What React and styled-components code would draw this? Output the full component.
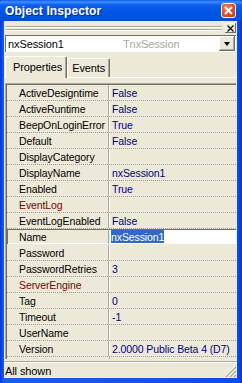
import React from "react";
import styled, { createGlobalStyle } from "styled-components";

const GlobalStyle = createGlobalStyle`
  html, body { margin: 0; padding: 0; overflow: hidden; background: #fff; }
  * { box-sizing: border-box; }
`;

const properties = [
  { name: "ActiveDesigntime", value: "False" },
  { name: "ActiveRuntime", value: "False" },
  { name: "BeepOnLoginError", value: "True" },
  { name: "Default", value: "False" },
  { name: "DisplayCategory", value: "" },
  { name: "DisplayName", value: "nxSession1" },
  { name: "Enabled", value: "True" },
  { name: "EventLog", value: "", linked: true },
  { name: "EventLogEnabled", value: "False" },
  { name: "Name", value: "nxSession1", selected: true },
  { name: "Password", value: "" },
  { name: "PasswordRetries", value: "3" },
  { name: "ServerEngine", value: "", linked: true },
  { name: "Tag", value: "0" },
  { name: "Timeout", value: "-1" },
  { name: "UserName", value: "" },
  { name: "Version", value: "2.0000 Public Beta 4 (D7)" },
];

const Window = styled.div`
  width: 242px;
  height: 383px;
  display: flex;
  flex-direction: column;
  background: linear-gradient(to right, #0831d9 0, #0a4ee6 2px, #1660e8 4px, #0a4ee6 238px, #0831d9 242px);
  font-family: "Liberation Sans", Arial, sans-serif;
  font-size: 10.5px;
  letter-spacing: -0.1px;
  color: #000;
`;

const TitleBar = styled.div`
  height: 21px;
  display: flex;
  align-items: center;
  justify-content: space-between;
  padding: 0 5px 0 5px;
  background: linear-gradient(to bottom, #0d5cf0 0, #3f8ef9 2px, #0e5ef0 5px, #0055e6 12px, #0050dc 19px, #0046cf 21px);
  border-radius: 2px 2px 0 0;
`;

const Title = styled.span`
  color: #fff;
  font-weight: bold;
  font-size: 12px;
  letter-spacing: 0.1px;
  text-shadow: 1px 1px 0 #0a2a8c;
`;

const CloseButton = styled.div`
  width: 15px;
  height: 15px;
  border: 1px solid #fff;
  border-radius: 3px;
  background: radial-gradient(circle at 35% 30%, #f08a6a 0, #e2532c 45%, #c23a14 100%);
  display: flex;
  align-items: center;
  justify-content: center;
  margin-right: 1px;
`;

const Body = styled.div`
  flex: 1;
  min-height: 0;
  margin: 0 5px 5px 4px;
  background: #ece9d8;
  display: flex;
  flex-direction: column;
`;

const DockBar = styled.div`
  height: 14px;
  display: flex;
  align-items: center;
  gap: 3px;
  padding: 0 1px 0 2px;
`;

const Grip = styled.div`
  flex: 1;
  height: 5px;
  background: linear-gradient(
    to bottom,
    #aca899 0 1px,
    #fff 1px 2px,
    transparent 2px 3px,
    #aca899 3px 4px,
    #fff 4px 5px
  );
`;

const MiniClose = styled.div`
  width: 11px;
  height: 10px;
  background: #ece9d8;
  box-shadow: inset -1px -1px #716f64, inset 1px 1px #fff;
  display: flex;
  align-items: center;
  justify-content: center;
`;

const Combo = styled.div`
  height: 17px;
  margin: 0 1px;
  display: flex;
  align-items: center;
  background: #fff;
  padding: 1px 1px 1px 3px;
  font-size: 11px;
  box-shadow: inset 1px 1px #716f64, inset -1px -1px #fff;
`;

const ComboName = styled.span`
  width: 115px;
`;

const ComboType = styled.span`
  flex: 1;
  color: #a7a6a0;
`;

const DropButton = styled.div`
  width: 16px;
  height: 15px;
  background: #ece9d8;
  box-shadow: inset -1px -1px #716f64, inset 1px 1px #fff, inset -2px -2px #aca899;
  display: flex;
  align-items: center;
  justify-content: center;
  &::after {
    content: "";
    border-left: 3.5px solid transparent;
    border-right: 3.5px solid transparent;
    border-top: 4px solid #000;
    margin-top: 1px;
  }
`;

const TabStrip = styled.div`
  height: 23px;
  margin-top: 3px;
  padding-left: 1px;
  display: flex;
  align-items: flex-end;
  border-bottom: 1px solid #fff;
`;

const Tab = styled.div`
  height: ${(p) => (p.$active ? "22px" : "19px")};
  margin-bottom: ${(p) => (p.$active ? "-1px" : "0")};
  padding: 0 ${(p) => (p.$active ? "4px" : "4px")} ${(p) => (p.$active ? "2px" : "1px")}
    ${(p) => (p.$active ? "7px" : "4px")};
  display: flex;
  align-items: center;
  background: #ece9d8;
  border-top: 1px solid #fff;
  border-left: 1px solid #fff;
  border-right: 1px solid #716f64;
  box-shadow: inset -1px 0 #aca899;
  border-radius: 2px 2px 0 0;
  font-size: 11px;
`;

const Grid = styled.div`
  margin: 5px 1px 0;
  padding-top: 1px;
  border-top: 1px solid #aca899;
  border-left: 1px solid #aca899;
  box-shadow: inset 1px 1px #716f64;
  display: flex;
  flex-direction: column;
`;

const Row = styled.div`
  height: 16px;
  display: flex;
  border-bottom: 1px dotted #a09e94;
  margin-left: 1px;
  ${(p) =>
    p.$selected &&
    `
    border-bottom-color: transparent;
    box-shadow: inset 1px 1px #716f64, inset 0 -1px #fff;
  `}
`;

const NameCell = styled.div`
  width: 102px;
  padding-left: 12px;
  display: flex;
  align-items: center;
  white-space: nowrap;
  overflow: hidden;
  color: ${(p) => (p.$linked ? "#800000" : "#000")};
  border-right: 1px solid #aca899;
`;

const ValueCell = styled.div`
  flex: 1;
  display: flex;
  align-items: center;
  padding-left: 2px;
  white-space: nowrap;
  overflow: hidden;
  color: #000080;
  border-left: 1px solid #fff;
  ${(p) =>
    p.$editing &&
    `
    background: #fff;
    margin: 1px 0 1px 1px;
    border-left: none;
    padding-left: 1px;
  `}
`;

const Highlight = styled.span`
  background: #316ac5;
  color: #fff;
  padding: 1px 0;
`;

const GridFill = styled.div`
  height: 2px;
  margin-left: 103px;
  border-left: 1px solid #aca899;
`;

const StatusBar = styled.div`
  height: 17px;
  margin-top: auto;
  border-top: 1px solid #aca899;
  box-shadow: inset 0 1px #fff;
  display: flex;
  align-items: center;
  justify-content: space-between;
  padding: 1px 1px 0 1px;
  font-size: 11px;
`;

const SizeGrip = styled.svg`
  align-self: flex-end;
  margin-bottom: 1px;
`;

export default function App() {
  return (
    <>
      <GlobalStyle />
      <Window>
        <TitleBar>
          <Title>Object Inspector</Title>
          <CloseButton>
            <svg width="9" height="9" viewBox="0 0 9 9">
              <path d="M1 1 L8 8 M8 1 L1 8" stroke="#fff" strokeWidth="1.8" />
            </svg>
          </CloseButton>
        </TitleBar>
        <Body>
          <DockBar>
            <Grip />
            <MiniClose>
              <svg width="7" height="7" viewBox="0 0 7 7">
                <path d="M0.5 0.5 L6.5 6.5 M6.5 0.5 L0.5 6.5" stroke="#000" strokeWidth="1.1" />
              </svg>
            </MiniClose>
          </DockBar>
          <Combo>
            <ComboName>nxSession1</ComboName>
            <ComboType>TnxSession</ComboType>
            <DropButton />
          </Combo>
          <TabStrip>
            <Tab $active>Properties</Tab>
            <Tab>Events</Tab>
          </TabStrip>
          <Grid>
            {properties.map((p) => (
              <Row key={p.name} $selected={p.selected}>
                <NameCell $linked={p.linked}>{p.name}</NameCell>
                <ValueCell $editing={p.selected}>
                  {p.selected ? <Highlight>{p.value}</Highlight> : p.value}
                </ValueCell>
              </Row>
            ))}
            <GridFill />
          </Grid>
          <StatusBar>
            <span>All shown</span>
            <SizeGrip width="12" height="12" viewBox="0 0 12 12">
              <path d="M11 1 L1 11 M11 5 L5 11 M11 9 L9 11" stroke="#fff" strokeWidth="1" />
              <path d="M12 2 L2 12 M12 6 L6 12 M12 10 L10 12" stroke="#aca899" strokeWidth="1.2" />
            </SizeGrip>
          </StatusBar>
        </Body>
      </Window>
    </>
  );
}
